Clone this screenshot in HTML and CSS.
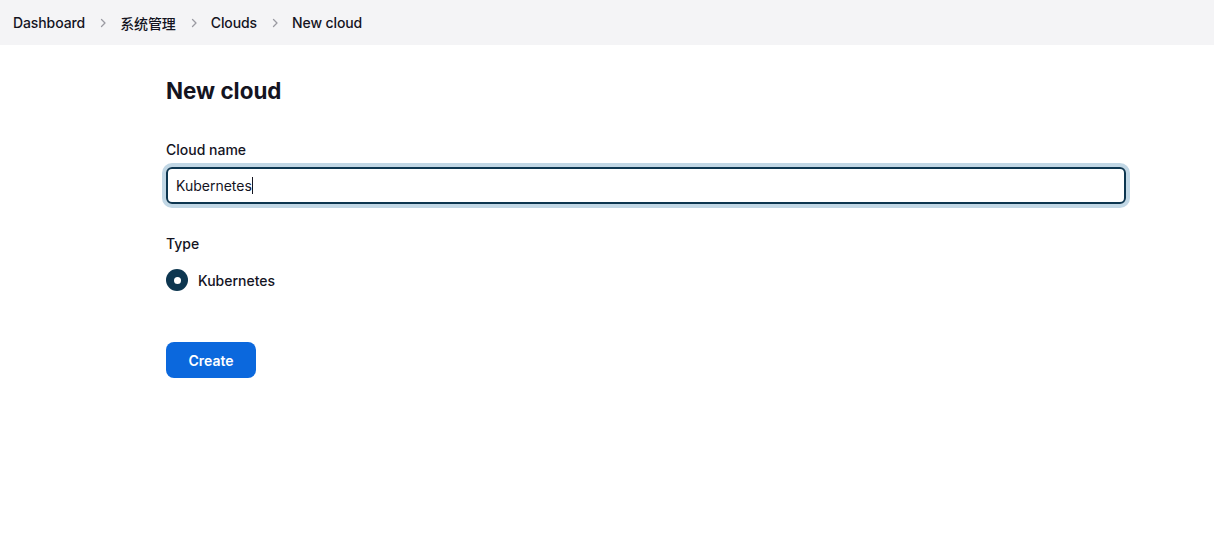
FILE: index.html
```html
<!DOCTYPE html>
<html>
<head>
<meta charset="utf-8">
<link rel="stylesheet" href="styles.css">
</head>
<body>
<nav class="crumbs">
  <span class="crumb">Dashboard</span>
  <svg class="chev" viewBox="0 0 10 10"><path d="M3.5 1.5 L7 5 L3.5 8.5" fill="none" stroke="#9a9aa2" stroke-width="1.3" stroke-linecap="round" stroke-linejoin="round"/></svg>
  <span class="crumb">系统管理</span>
  <svg class="chev" viewBox="0 0 10 10"><path d="M3.5 1.5 L7 5 L3.5 8.5" fill="none" stroke="#9a9aa2" stroke-width="1.3" stroke-linecap="round" stroke-linejoin="round"/></svg>
  <span class="crumb">Clouds</span>
  <svg class="chev" viewBox="0 0 10 10"><path d="M3.5 1.5 L7 5 L3.5 8.5" fill="none" stroke="#9a9aa2" stroke-width="1.3" stroke-linecap="round" stroke-linejoin="round"/></svg>
  <span class="crumb">New cloud</span>
</nav>
<main class="main">
  <h1 class="title">New cloud</h1>
  <div class="field">
    <div class="label">Cloud name</div>
    <div class="input"><span>Kubernetes</span><span class="caret"></span></div>
  </div>
  <div class="field type">
    <div class="label">Type</div>
    <div class="radio-row"><span class="radio"></span><span class="radio-label">Kubernetes</span></div>
  </div>
  <button class="btn">Create</button>
</main>
</body>
</html>
```
FILE: styles.css
```css
* { box-sizing: border-box; }
body {
  margin: 0;
  font-family: Inter, "Noto Sans CJK SC", sans-serif;
  color: #14141f;
  background: #fff;
}
.crumbs {
  height: 45px;
  background: #f4f4f6;
  display: flex;
  align-items: center;
  padding-left: 13px;
  font-size: 14px;
  font-weight: 500;
  letter-spacing: -0.1px;
}
.chev { width: 10px; height: 10px; margin: 0 12px 0 13px; }
.main {
  padding-left: 166px;
  width: 1126px;
  padding-top: 31px;
}
.title {
  margin: 0;
  font-size: 22.4px;
  font-weight: 700;
  line-height: 30px;
}
.field { margin-top: 34px; }
.label {
  font-size: 14px;
  font-weight: 500;
  line-height: 20px;
}
.input {
  margin-top: 7px;
  height: 37px;
  border: 2px solid #0d3650;
  border-radius: 6px;
  box-shadow: 0 0 0 4px #c1d7e5;
  display: flex;
  align-items: center;
  padding-left: 8px;
  font-size: 14px;
}
.caret { width: 1px; height: 17px; background: #14141f; }
.type { margin-top: 30px; }
.radio-row {
  margin-top: 15px;
  display: flex;
  align-items: center;
  gap: 10px;
}
.radio {
  width: 22px; height: 22px;
  border-radius: 50%;
  background: #0d3650;
  display: flex; align-items: center; justify-content: center;
}
.radio::after {
  content: "";
  width: 7px; height: 7px; border-radius: 50%; background: #fff;
}
.radio-label { font-size: 14px; font-weight: 500; }
.btn {
  margin-top: 51px;
  width: 90px;
  height: 36px;
  border: none;
  border-radius: 8px;
  background: #0b68dd;
  color: #fff;
  font-family: Inter, sans-serif;
  font-size: 14px;
  font-weight: 600;
}
```
